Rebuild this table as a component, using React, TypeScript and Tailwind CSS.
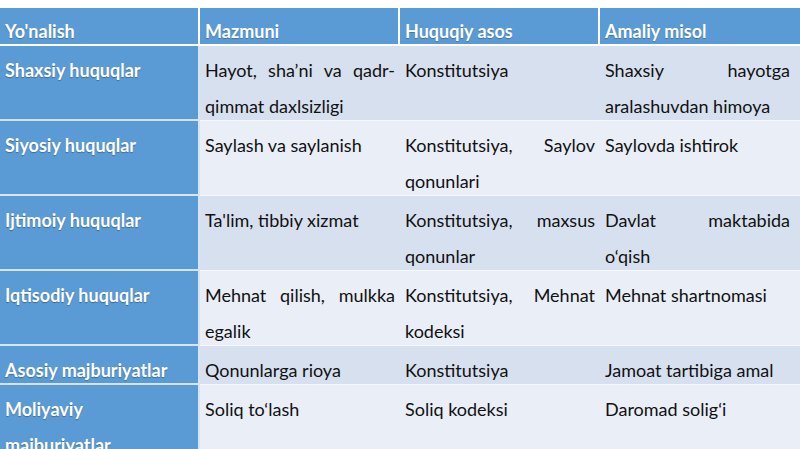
import React from "react";

const header = ["Yo'nalish", "Mazmuni", "Huquqiy asos", "Amaliy misol"];

const rows: string[][] = [
  ["Shaxsiy huquqlar", "Hayot, sha’ni va qadr-qimmat daxlsizligi", "Konstitutsiya", "Shaxsiy hayotga aralashuvdan himoya"],
  ["Siyosiy huquqlar", "Saylash va saylanish", "Konstitutsiya, Saylov qonunlari", "Saylovda ishtirok"],
  ["Ijtimoiy huquqlar", "Ta'lim, tibbiy xizmat", "Konstitutsiya, maxsus qonunlar", "Davlat maktabida o‘qish"],
  ["Iqtisodiy huquqlar", "Mehnat qilish, mulkka egalik", "Konstitutsiya, Mehnat kodeksi", "Mehnat shartnomasi"],
  ["Asosiy majburiyatlar", "Qonunlarga rioya", "Konstitutsiya", "Jamoat tartibiga amal"],
  ["Moliyaviy majburiyatlar", "Soliq to‘lash", "Soliq kodeksi", "Daromad solig‘i"],
];

export default function App() {
  return (
    <div
      className="w-[800px] h-[449px] overflow-hidden bg-white pt-[8px]"
      style={{ fontFamily: "Lato, 'Open Sans', sans-serif" }}
    >
      <div className="grid grid-cols-[200px_200px_200px_200px] text-[18px] leading-[36px]">
        {header.map((h, i) => (
          <div
            key={h}
            className={`bg-[#5b9bd5] text-white font-bold px-[5px] pt-[5px] border-b-2 border-white [text-shadow:0_1px_1px_rgba(0,0,0,0.25)] ${
              i < 3 ? "border-r-2" : ""
            }`}
          >
            <div className="-mb-[5px]">{h}</div>
          </div>
        ))}
        {rows.map((r, ri) => {
          const band = ri % 2 === 0 ? "bg-[#d7e0ee]" : "bg-[#e9eef7]";
          return r.map((c, ci) =>
            ci === 0 ? (
              <div
                key={ri + "-" + ci}
                className="bg-[#5b9bd5] text-white font-bold pl-[5px] pr-[12px] pt-[6px] border-b-2 border-r-2 border-[#d6e5f5] [text-shadow:0_1px_1px_rgba(0,0,0,0.3)]"
              >
                <div className="-mb-[5px]">{c}</div>
              </div>
            ) : (
              <div
                key={ri + "-" + ci}
                className={`${band} text-[#111111] pl-[5px] ${ci === 3 ? "pr-[10px]" : "pr-[5px]"} pt-[6px] border-b border-[#f4f7fb] text-justify`}
              >
                <div className="-mb-[4px]">{c}</div>
              </div>
            )
          );
        })}
      </div>
    </div>
  );
}
